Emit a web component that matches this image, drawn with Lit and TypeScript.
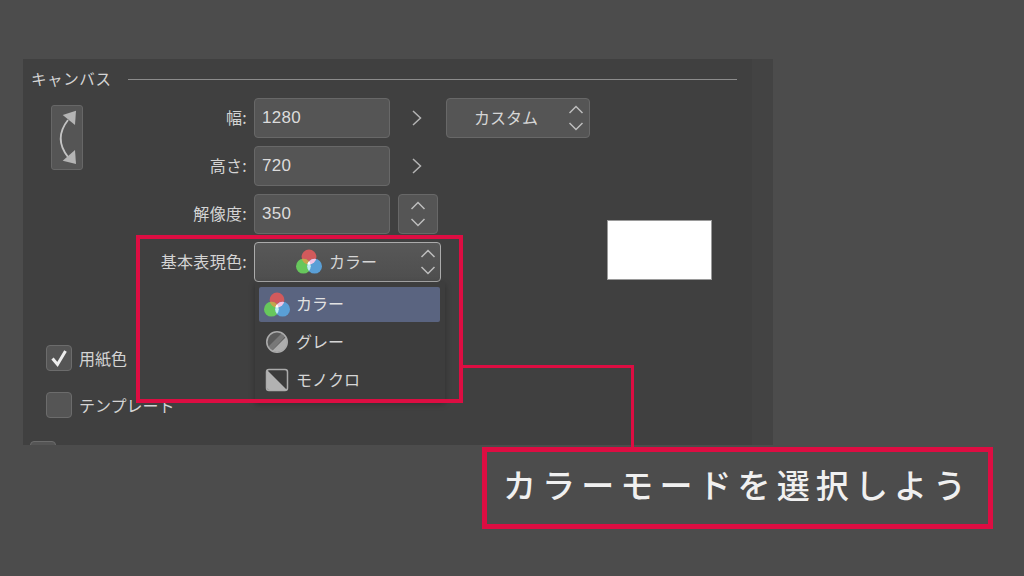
import { LitElement, html, css, svg } from "lit";
import { customElement } from "lit/decorators.js";

const updown = html`<svg class="updown" viewBox="0 0 16 26" width="16" height="26"><path d="M1.5 8 8 1.5 14.5 8M1.5 18 8 24.5 14.5 18" fill="none" stroke="#bdbdbd" stroke-width="1.5"/></svg>`;
const chevron = html`<svg class="chev" viewBox="0 0 10 16" width="10" height="16"><path d="M1 1l7.5 7L1 15" fill="none" stroke="#b4b4b4" stroke-width="1.5"/></svg>`;

function colorIcon(id: string) {
  return html`<svg class="ic" viewBox="0 0 26 26" width="26" height="26">
    <defs>
      <clipPath id="${id}r"><circle cx="13" cy="8" r="7.4"/></clipPath>
      <clipPath id="${id}g"><circle cx="7.4" cy="17.2" r="7.4"/></clipPath>
      <clipPath id="${id}b"><circle cx="18.6" cy="17.2" r="7.4"/></clipPath>
    </defs>
    <circle cx="13" cy="8" r="7.4" fill="#d25a5c"/>
    <circle cx="7.4" cy="17.2" r="7.4" fill="#67c75c"/>
    <circle cx="18.6" cy="17.2" r="7.4" fill="#5a9fd6"/>
    <g clip-path="url(#${id}r)"><circle cx="7.4" cy="17.2" r="7.4" fill="#c9a24e"/><circle cx="18.6" cy="17.2" r="7.4" fill="#f0c4e4"/></g>
    <g clip-path="url(#${id}g)"><circle cx="18.6" cy="17.2" r="7.4" fill="#bfeef0"/></g>
    <g clip-path="url(#${id}r)"><g clip-path="url(#${id}g)"><circle cx="18.6" cy="17.2" r="7.4" fill="#fff"/></g></g>
  </svg>`;
}

const grayIcon = html`<svg class="ic" viewBox="0 0 26 26" width="26" height="26">
  <defs><clipPath id="gc"><circle cx="13" cy="13" r="10"/></clipPath></defs>
  <g clip-path="url(#gc)">
    <rect width="26" height="26" fill="#5a5a5a"/>
    ${svg`<path d="M0 22 22 0h6L4 26H0z" fill="#787878"/><path d="M4 26 28 2v24z" fill="#adadad"/>`}
  </g>
  <circle cx="13" cy="13" r="10.2" fill="none" stroke="#ababab" stroke-width="1.6"/>
</svg>`;

const monoIcon = html`<svg class="ic" viewBox="0 0 26 26" width="26" height="26">
  <rect x="2.5" y="2.5" width="21" height="21" rx="2.5" fill="#3c3c3c" stroke="#ababab" stroke-width="1.5"/>
  <path d="M3 3 23 23H5.5A2.5 2.5 0 0 1 3 20.5z" fill="#b2b2b2"/>
</svg>`;

@customElement("app-root")
export class AppRoot extends LitElement {
  static styles = css`
    :host {
      display: block;
      position: relative;
      width: 1024px;
      height: 576px;
      overflow: hidden;
      background: #4c4c4c;
      color: #d6d6d6;
      font-family: "Liberation Sans", "Noto Sans CJK JP", sans-serif;
    }
    .panel {
      position: absolute;
      left: 23px;
      top: 59px;
      width: 750px;
      height: 386px;
      box-sizing: border-box;
      padding-left: 8px;
      overflow: hidden;
      background: linear-gradient(90deg, #404040 0, #404040 729px, #434343 729px);
    }
    .legend {
      display: flex;
      align-items: center;
      height: 39px;
      padding-bottom: 2px;
      box-sizing: border-box;
      gap: 16px;
      font-size: 15.5px;
      letter-spacing: 0.6px;
      font-family: "Noto Sans CJK JP", sans-serif;
      color: #d4d4d4;
    }
    .legend::after {
      content: "";
      width: 609px;
      height: 1px;
      margin-top: 3px;
      background: #8c8c8c;
    }
    .body { display: flex; }
    .swap {
      box-sizing: border-box;
      width: 32px;
      height: 65px;
      margin: 7px 0 0 20px;
      background: #555;
      border: 1px solid #676767;
      border-radius: 3px;
      flex: none;
    }
    .swap svg { display: block; }
    .rows {
      display: flex;
      flex-direction: column;
      gap: 8px;
      width: 507px;
      flex: none;
    }
    .row { display: flex; align-items: center; height: 40px; }
    .lbl {
      width: 164px;
      margin-right: 7px;
      padding-bottom: 3px;
      text-align: right;
      font-size: 16px;
      letter-spacing: 0.3px;
      font-family: "Noto Sans CJK JP", sans-serif;
      color: #d4d4d4;
      flex: none;
    }
    .field {
      box-sizing: border-box;
      width: 136px;
      height: 40px;
      display: flex;
      align-items: center;
      padding-left: 7px;
      font-size: 17px;
      letter-spacing: 0.3px;
      background: #555;
      border: 1px solid #686868;
      border-radius: 4px;
      color: #dcdcdc;
    }
    .chev { margin-left: 22px; flex: none; }
    .custom {
      box-sizing: border-box;
      position: relative;
      width: 144px;
      height: 40px;
      margin-left: 24px;
      display: flex;
      align-items: center;
      padding: 0 0 2px 27px;
      font-size: 16px;
      font-family: "Noto Sans CJK JP", sans-serif;
      background: #555;
      border: 1px solid #686868;
      border-radius: 4px;
    }
    .updown { position: absolute; right: 5px; top: 6px; }
    .step {
      box-sizing: border-box;
      position: relative;
      width: 40px;
      height: 40px;
      margin-left: 8px;
      background: #555;
      border: 1px solid #686868;
      border-radius: 4px;
    }
    .step .updown { right: 11px; }
    .selwrap { position: relative; }
    .select {
      box-sizing: border-box;
      position: relative;
      width: 187px;
      height: 40px;
      display: flex;
      align-items: center;
      padding-left: 41px;
      gap: 7px;
      font-size: 16px;
      font-family: "Noto Sans CJK JP", sans-serif;
      background: linear-gradient(#585858, #4e4e4e);
      border: 1px solid #ababab;
      border-radius: 4px;
    }
    .select .updown { right: 4px; }
    .select .ic { margin-bottom: -2px; }
    .select { padding-bottom: 2px; }
    .menu {
      position: absolute;
      left: 1px;
      top: 40px;
      width: 190px;
      height: 120px;
      box-sizing: border-box;
      padding: 5px 5px 0 4px;
      display: flex;
      flex-direction: column;
      gap: 2px;
      background: #3d3d3d;
      box-shadow: 0 2px 6px rgba(0, 0, 0, 0.28);
    }
    .item {
      flex: none;
      box-sizing: border-box;
      height: 36px;
      display: flex;
      align-items: center;
      gap: 6px;
      padding: 0 0 3px 5px;
      border-radius: 2px;
      font-size: 16px;
      font-family: "Noto Sans CJK JP", sans-serif;
    }
    .item .ic { margin-bottom: -3px; }
    .item.on { background: #5a6480; color: #e2e2e2; height: 35px; }
    .ic { flex: none; display: block; }
    .preview {
      box-sizing: border-box;
      width: 105px;
      height: 60px;
      margin: 122px 0 0 17px;
      background: #fff;
      border: 1px solid #9a9a9a;
      flex: none;
    }
    .checks {
      display: flex;
      flex-direction: column;
      align-items: flex-start;
      gap: 21px;
      margin: 63px 0 0 15px;
    }
    .check {
      display: flex;
      align-items: center;
      gap: 7px;
      height: 26px;
      font-size: 16px;
      font-family: "Noto Sans CJK JP", sans-serif;
      color: #d4d4d4;
    }
    .box {
      box-sizing: border-box;
      width: 26px;
      height: 26px;
      background: #555;
      border: 1px solid #6c6c6c;
      border-radius: 4px;
      flex: none;
    }
    .box svg { display: block; }
    .cut { margin: 23px 0 0 -1px; }
    .redbox {
      position: absolute;
      left: 136px;
      top: 235px;
      width: 327px;
      height: 168px;
      box-sizing: border-box;
      border: 4px solid #dd0d42;
    }
    .wire {
      position: absolute;
      left: 463px;
      top: 365px;
      width: 171px;
      height: 82px;
      box-sizing: border-box;
      border-top: 3px solid #dd0d42;
      border-right: 3px solid #dd0d42;
    }
    .callout {
      position: absolute;
      left: 482px;
      top: 447px;
      width: 511px;
      height: 82px;
      box-sizing: border-box;
      border: 5px solid #dd0d42;
      background: #4c4c4c;
      display: flex;
      align-items: center;
      padding: 0 0 8px 16px;
      font-family: "Noto Sans CJK JP", serif;
      font-weight: 500;
      font-size: 33px;
      letter-spacing: 6.1px;
      color: #f0f0f0;
      white-space: nowrap;
    }
  `;

  render() {
    return html`
      <div class="panel">
        <div class="legend">キャンバス</div>
        <div class="body">
          <div class="swap">
            <svg viewBox="0 0 30 63" width="30" height="63">
              <path d="M16 14Q1.400 32.500 16 51" fill="none" stroke="#c4c4c4" stroke-width="1.8"/>
              <path d="M24 4.700 10.700 9 23 19z" fill="#b4b4b4"/>
              <path d="M24 58 10.700 54.700 23 44z" fill="#b4b4b4"/>
            </svg>
          </div>
          <div class="rows">
            <div class="row">
              <span class="lbl">幅:</span><div class="field">1280</div>${chevron}
              <div class="custom">カスタム${updown}</div>
            </div>
            <div class="row">
              <span class="lbl">高さ:</span><div class="field">720</div>${chevron}
            </div>
            <div class="row">
              <span class="lbl">解像度:</span><div class="field">350</div>
              <div class="step">${updown}</div>
            </div>
            <div class="row">
              <span class="lbl">基本表現色:</span>
              <div class="selwrap">
                <div class="select">${colorIcon("a")}カラー${updown}</div>
                <div class="menu">
                  <div class="item on">${colorIcon("b")}カラー</div>
                  <div class="item">${grayIcon}グレー</div>
                  <div class="item">${monoIcon}モノクロ</div>
                </div>
              </div>
            </div>
          </div>
          <div class="preview"></div>
        </div>
        <div class="checks">
          <div class="check">
            <div class="box">
              <svg viewBox="0 0 24 24" width="24" height="24"><path d="M5.500 12.500 10.500 18.500 18.500 5" fill="none" stroke="#eee" stroke-width="3"/></svg>
            </div>用紙色
          </div>
          <div class="check"><div class="box"></div>テンプレート</div>
        </div>
        <div class="box cut"></div>
      </div>
      <div class="redbox"></div>
      <div class="wire"></div>
      <div class="callout">カラーモードを選択しよう</div>
    `;
  }
}
